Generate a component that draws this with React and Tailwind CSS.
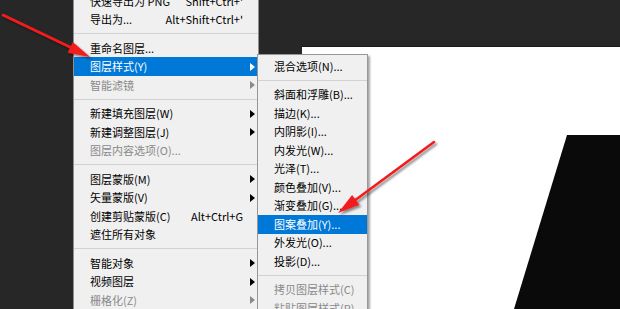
import React from "react";

function Tri({ color }) {
  return (
    <svg width="5" height="8" viewBox="0 0 5 8" className="block">
      <polygon points="0,0 5,4 0,8" fill={color} />
    </svg>
  );
}

function Item({ label, shortcut, arrow, disabled, active }) {
  const cls = active
    ? "bg-[#0078d7] text-white"
    : disabled
    ? "text-[#8a8a8a]"
    : "text-black";
  const triColor = active ? "#ffffff" : disabled ? "#8a8a8a" : "#000000";
  return (
    <div className={`flex h-[18.5px] items-center pl-[16px] pr-[3px] ${cls}`}>
      <span className="flex-1 whitespace-nowrap">{label}</span>
      {shortcut ? <span className="whitespace-nowrap">{shortcut}</span> : null}
      <span className="flex w-[12px] justify-end">{arrow ? <Tri color={triColor} /> : null}</span>
    </div>
  );
}

function Sep() {
  return (
    <div className="flex h-[10px] items-center">
      <div className="h-px w-full bg-[#d2d2d2]" />
    </div>
  );
}

function SubItem({ label, disabled, active }) {
  const cls = active
    ? "bg-[#0078d7] text-white"
    : disabled
    ? "text-[#8a8a8a]"
    : "text-black";
  return (
    <div className={`flex h-[18.5px] items-center pl-[16px] ${cls}`}>
      <span className="whitespace-nowrap">{label}</span>
    </div>
  );
}

export default function App() {
  return (
    <div className="relative h-[309px] w-[620px] overflow-hidden bg-[#272727] font-['Noto_Sans_CJK_SC',sans-serif] text-[11px] leading-none">
      <div className="flex h-full">
        <div className="w-[73px] shrink-0" />
        <div className="h-full w-[186px] shrink-0 border-x border-[#8f8f8f] bg-[#f0f0f0]">
          <div className="-mt-[8.25px]">
            <Item label="快速导出为 PNG" shortcut="Shift+Ctrl+'" />
            <Item label="导出为..." shortcut="Alt+Shift+Ctrl+'" />
            <Sep />
            <Item label="重命名图层..." />
            <Item label="图层样式(Y)" arrow active />
            <Item label="智能滤镜" arrow disabled />
            <Sep />
            <Item label="新建填充图层(W)" arrow />
            <Item label="新建调整图层(J)" arrow />
            <Item label="图层内容选项(O)..." disabled />
            <Sep />
            <Item label="图层蒙版(M)" arrow />
            <Item label="矢量蒙版(V)" arrow />
            <Item label="创建剪贴蒙版(C)" shortcut="Alt+Ctrl+G" />
            <Item label="遮住所有对象" />
            <Sep />
            <Item label="智能对象" arrow />
            <Item label="视频图层" arrow />
            <Item label="栅格化(Z)" arrow disabled />
          </div>
        </div>
        <div className="flex h-full flex-1 flex-col">
          <div className="h-[46px] shrink-0" />
          <div className="flex flex-1">
            <div className="w-[43px] shrink-0" />
            <div className="relative flex-1 border-t border-[#1a1a1a] bg-white">
              <svg className="absolute inset-0 h-full w-full" viewBox="0 0 318 262" preserveAspectRatio="none">
                <polygon points="265,88 318,88 318,262 212,262" fill="#0a0a0a" />
              </svg>
            </div>
          </div>
        </div>
      </div>

      <div className="absolute left-[257px] top-[54px] w-[111px] border border-[#979797] bg-[#f0f0f0] pt-[2px] shadow-[2px_2px_2px_rgba(0,0,0,0.35)]">
        <SubItem label="混合选项(N)..." />
        <Sep />
        <SubItem label="斜面和浮雕(B)..." />
        <SubItem label="描边(K)..." />
        <SubItem label="内阴影(I)..." />
        <SubItem label="内发光(W)..." />
        <SubItem label="光泽(T)..." />
        <SubItem label="颜色叠加(V)..." />
        <SubItem label="渐变叠加(G)..." />
        <SubItem label="图案叠加(Y)..." active />
        <SubItem label="外发光(O)..." />
        <SubItem label="投影(D)..." />
        <Sep />
        <SubItem label="拷贝图层样式(C)" disabled />
        <SubItem label="粘贴图层样式(P)" disabled />
      </div>

      <svg className="pointer-events-none absolute inset-0" width="620" height="309" viewBox="0 0 620 309">
        <defs>
          <filter id="sh" x="-20%" y="-20%" width="140%" height="140%">
            <feDropShadow dx="2" dy="2" stdDeviation="1.2" floodColor="#000" floodOpacity="0.45" />
          </filter>
        </defs>
        <g filter="url(#sh)">
          <line x1="3" y1="15" x2="72" y2="48" stroke="#f21c1c" strokeWidth="2.6" strokeLinecap="round" />
          <polygon points="90,57 67.6,52.8 72.8,42" fill="#f21c1c" />
          <line x1="434" y1="142" x2="354" y2="201" stroke="#f21c1c" strokeWidth="2.6" strokeLinecap="round" />
          <polygon points="338,213 359.3,204.7 352.1,195.1" fill="#f21c1c" />
        </g>
      </svg>
    </div>
  );
}
